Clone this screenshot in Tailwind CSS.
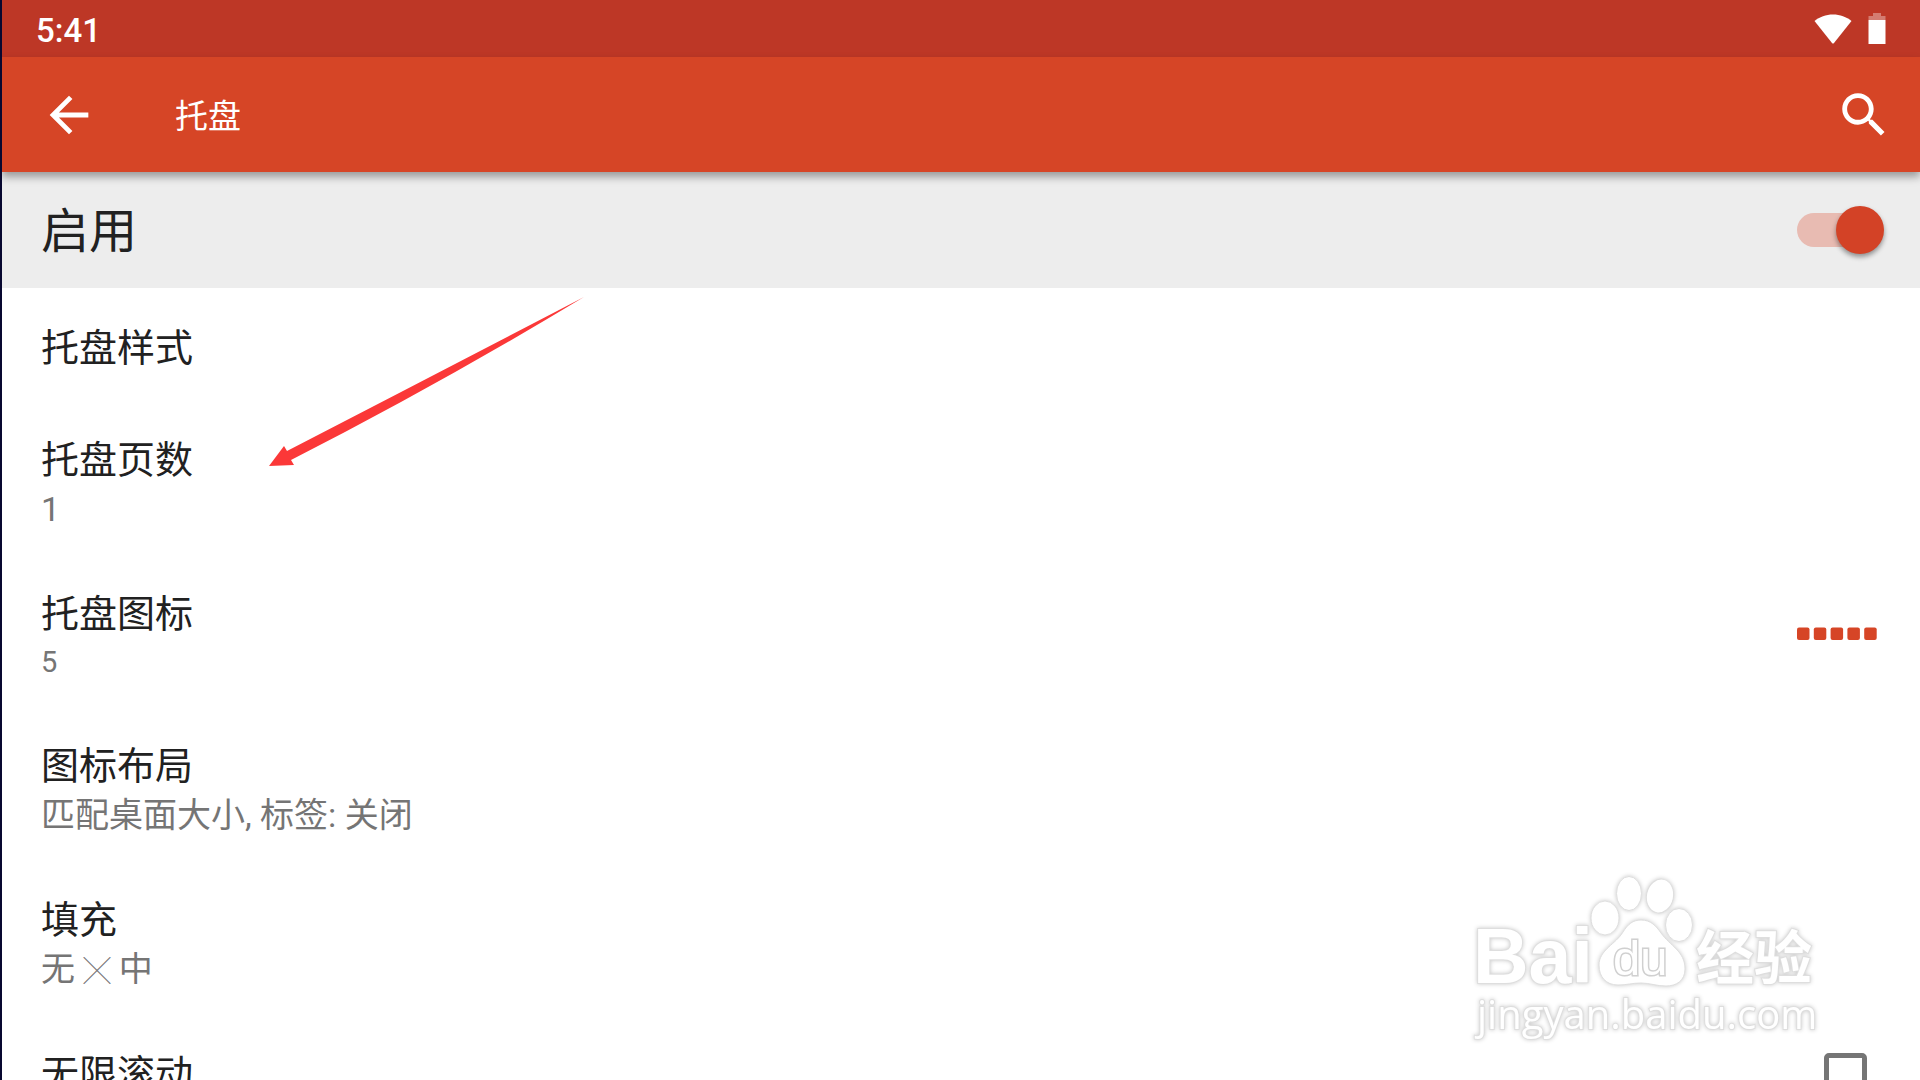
<!DOCTYPE html>
<html lang="zh-CN">
<head>
  <meta charset="UTF-8">
  <meta name="viewport" content="width=device-width, initial-scale=1">
  <title>托盘</title>
  <script src="https://cdn.jsdelivr.net/npm/@tailwindcss/browser@4"></script>
</head>
<body class="relative flex flex-col h-screen overflow-hidden border-l-2 border-[#080830] bg-white text-[#212121] font-[Roboto,'Noto_Sans_CJK_SC',sans-serif]">

  <!-- status bar -->
  <div class="flex shrink-0 items-center justify-between h-[57px] pl-[34px] pr-[34px] bg-[#bd3726] text-white">
    <span class="pt-1 text-[33px] leading-[54px] font-medium">5:41</span>
    <div class="flex items-center gap-4">
      <svg class="w-[38px] h-[32px]" viewBox="0 0 38 32" fill="#fff"><path d="M0.500 8C5.500 4 12 1.500 19 1.500S32.500 4 37.500 8L20 30Q19 31 18 30Z"/></svg>
      <svg class="w-[18px] h-[32px]" viewBox="0 0 18 32"><path d="M5 0h8v3h4.500v4H0.500V3H5Z" fill="#fff" fill-opacity=".35"/><path d="M0.500 7h17v24h-17Z" fill="#fff"/></svg>
    </div>
  </div>

  <!-- app bar -->
  <header class="relative z-10 flex shrink-0 items-center h-[115px] pl-[38px] pr-[27px] bg-[#d64526] text-white shadow-[0_5px_8px_rgba(0,0,0,0.35)]">
    <button aria-label="返回" class="w-[58px] h-[58px]">
      <svg viewBox="0 0 24 24" fill="currentColor"><path d="M20 11H7.830l5.590-5.590L12 4l-8 8 8 8 1.410-1.410L7.830 13H20v-2z"/></svg>
    </button>
    <h1 class="flex-1 pt-1 pl-[77px] text-[33px] leading-[48px]">托盘</h1>
    <button aria-label="搜索" class="w-[58px] h-[58px]">
      <svg viewBox="0 0 24 24" fill="currentColor"><path d="M15.500 14h-.79l-.28-.27C15.410 12.590 16 11.110 16 9.500 16 5.910 13.090 3 9.500 3S3 5.910 3 9.500 5.910 16 9.500 16c1.610 0 3.090-.59 4.230-1.570l.27.280v.79l5 4.990L20.490 19l-4.990-5zm-6 0C7.010 14 5 11.990 5 9.500S7.010 5 9.500 5 14 7.010 14 9.500 11.990 14 9.500 14z"/></svg>
    </button>
  </header>

  <label class="flex shrink-0 items-center justify-between h-[116px] pl-[39px] pr-9 bg-[#ededed]">
    <span class="pt-1 text-[48px] leading-[64px]">启用</span>
    <input type="checkbox" checked class="appearance-none relative w-[87px] h-12 before:absolute before:left-0 before:top-[7px] before:w-[76px] before:h-[34px] before:rounded-full before:bg-[#e8bbb2] after:absolute after:right-0 after:top-0 after:w-12 after:h-12 after:rounded-full after:bg-[#d34226] after:shadow-[0_3px_5px_rgba(0,0,0,0.4)]">
  </label>

  <main class="flex flex-col pt-px">
    <button class="shrink-0 pl-[39px] py-[34px] text-left text-[38px] leading-[50px]">托盘样式</button>

    <button class="shrink-0 pl-[39px] py-7 text-left">
      <span class="block text-[38px] leading-[50px]">托盘页数</span>
      <span class="block text-[34px] leading-[48px] text-[#757575]">1</span>
    </button>

    <button class="flex shrink-0 items-center justify-between pl-[39px] pr-9 py-7 text-left">
      <span>
        <span class="block text-[38px] leading-[50px]">托盘图标</span>
        <span class="block text-[29px] leading-[46px] text-[#757575]">5</span>
      </span>
      <svg class="mb-2 w-[87px] h-[13px]" viewBox="0 0 87 13" fill="#d64526">
        <rect x="0" y="0.5" width="12.500" height="12.500" rx="2"/>
        <rect x="16.800" y="0.5" width="12.500" height="12.500" rx="2"/>
        <rect x="33.600" y="0.5" width="12.500" height="12.500" rx="2"/>
        <rect x="50.400" y="0.5" width="12.500" height="12.500" rx="2"/>
        <rect x="67.200" y="0.5" width="12.500" height="12.500" rx="2"/>
      </svg>
    </button>

    <button class="shrink-0 pl-[39px] py-7 text-left">
      <span class="block text-[38px] leading-[50px]">图标布局</span>
      <span class="block text-[34px] leading-[48px] text-[#757575]">匹配桌面大小, 标签: 关闭</span>
    </button>

    <button class="shrink-0 pl-[39px] py-7 text-left">
      <span class="block text-[38px] leading-[50px]">填充</span>
      <span class="block text-[34px] leading-[48px] text-[#757575]">无 <span class="text-[27px] leading-none font-bold">╳</span> 中</span>
    </button>

    <label class="flex shrink-0 items-center justify-between pl-[39px] pr-[53px] py-7">
      <span class="text-[38px] leading-[50px]">无限滚动</span>
      <input type="checkbox" class="appearance-none w-[43px] h-[43px] border-5 border-[#757575] rounded-[5px]">
    </label>
  </main>

  <!-- pointer to the page count row -->
  <svg class="absolute left-[266px] top-[296px] w-[318px] h-[172px]" viewBox="0 0 318 172" fill="#fb3838">
    <path d="M1 170L16 150L19 155Q170 77 316 1Q170 89 23 164L26 169Z"/>
  </svg>

  <!-- watermark -->
  <svg class="absolute right-[95px] bottom-[24px] w-[354px] h-[180px] drop-shadow-[0_0_2px_rgba(0,0,0,0.22)]" viewBox="0 0 354 180" fill="#fff" stroke="#dedede" stroke-width="1">
    <ellipse cx="134" cy="42" rx="14" ry="17"/>
    <ellipse cx="158" cy="17.500" rx="12.500" ry="17"/>
    <ellipse cx="189" cy="20" rx="13.500" ry="17" transform="rotate(12 189 20)"/>
    <ellipse cx="208" cy="49" rx="13.500" ry="16.500"/>
    <path d="M170 44C180 44 185 50 190 57C199 70 214 75 214 93C214 105 205 110 195 110C185 110 179 107 170 107C161 107 156 109 147 109C135 109 128 101 128 89C128 74 145 68 152 56C157 48 162 44 170 44Z"/>
    <g paint-order="stroke" stroke-width="2" font-weight="700">
      <text x="2" y="107" font-size="77" font-family="Liberation Sans, sans-serif">Bai</text>
      <text x="142" y="99" font-size="49" stroke="#d0d0d0" stroke-width="3" font-weight="400" font-family="Liberation Sans, sans-serif">du</text>
      <text x="225" y="103" font-size="58" font-family="Noto Sans CJK SC, sans-serif">经验</text>
      <text x="6" y="153" font-size="40" font-weight="400" font-family="Open Sans, sans-serif">jingyan.baidu.com</text>
    </g>
  </svg>

</body>
</html>
